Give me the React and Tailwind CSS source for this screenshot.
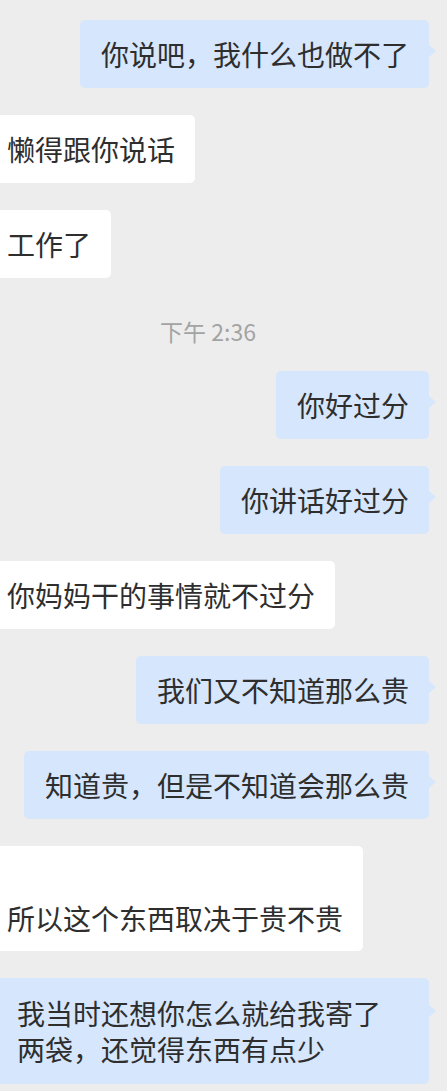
import React from "react";

const font = { fontFamily: '"Noto Sans CJK SC", "Noto Sans", sans-serif' };

function Right({ children, className = "" }) {
  return (
    <div className="flex justify-end pr-[18px]">
      <div
        className={`relative rounded-[5px] bg-[#d6e6fc] text-[28px] text-[#2e2e2e] pl-[21px] pr-[20px] ${className}`}
      >
        {children}
        <span className="absolute right-[-7px] top-[25px] h-0 w-0 border-y-[6px] border-l-[7px] border-y-transparent border-l-[#d6e6fc]" />
      </div>
    </div>
  );
}

function Left({ children, className = "" }) {
  return (
    <div className="flex justify-start">
      <div
        className={`rounded-r-[5px] bg-white text-[28px] text-[#2e2e2e] pl-[7px] pr-[20px] ${className}`}
      >
        {children}
      </div>
    </div>
  );
}

export default function App() {
  return (
    <div
      className="w-[447px] h-[1091px] overflow-hidden bg-[#ededed] flex flex-col gap-[27px] pt-[20px]"
      style={font}
    >
      <Right className="leading-[36px] py-4">你说吧，我什么也做不了</Right>
      <Left className="leading-[36px] py-4">懒得跟你说话</Left>
      <Left className="leading-[36px] py-4">工作了</Left>
      <div className="mt-[14px] mb-[1px] flex justify-center">
        <span className="pr-[31px] text-[23px] leading-[24px] text-[#a3a3a3]">下午 2:36</span>
      </div>
      <Right className="leading-[36px] py-4">你好过分</Right>
      <Right className="leading-[36px] py-4">你讲话好过分</Right>
      <Left className="leading-[36px] py-4">你妈妈干的事情就不过分</Left>
      <Right className="leading-[36px] py-4">我们又不知道那么贵</Right>
      <Right className="leading-[36px] py-4">知道贵，但是不知道会那么贵</Right>
      <Left className="leading-[36px] pt-[54px] pb-[15px]">所以这个东西取决于贵不贵</Left>
      <div className="flex justify-start pr-[18px]">
        <div className="relative w-[429px] rounded-r-[5px] bg-[#d6e6fc] text-[28px] text-[#2e2e2e] leading-[36px] pl-[17px] pr-[20px] py-[17px]">
          <div>我当时还想你怎么就给我寄了</div>
          <div>两袋，还觉得东西有点少</div>
          <span className="absolute right-[-7px] top-[27px] h-0 w-0 border-y-[6px] border-l-[7px] border-y-transparent border-l-[#d6e6fc]" />
        </div>
      </div>
    </div>
  );
}
